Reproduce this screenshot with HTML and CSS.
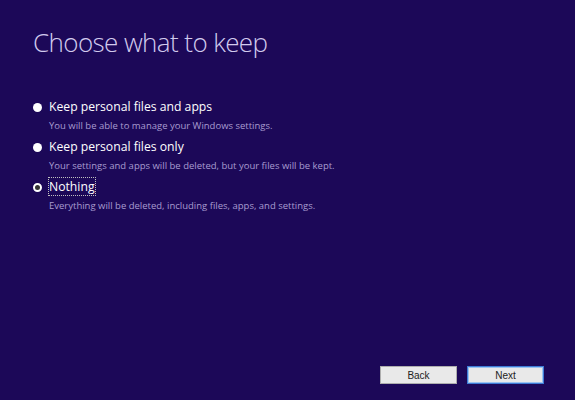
FILE: index.html
```html
<!DOCTYPE html>
<html>
<head>
<meta charset="utf-8">
<link rel="stylesheet" href="styles.css">
</head>
<body>
<div class="page">
  <h1 class="title">Choose what to keep</h1>
  <div class="options">
    <div class="option">
      <span class="radio"></span>
      <div class="text">
        <div class="label">Keep personal files and apps</div>
        <div class="desc">You will be able to manage your Windows settings.</div>
      </div>
    </div>
    <div class="option">
      <span class="radio"></span>
      <div class="text">
        <div class="label">Keep personal files only</div>
        <div class="desc">Your settings and apps will be deleted, but your files will be kept.</div>
      </div>
    </div>
    <div class="option">
      <span class="radio checked"></span>
      <div class="text">
        <div class="label"><span class="focus">Nothing</span></div>
        <div class="desc">Everything will be deleted, including files, apps, and settings.</div>
      </div>
    </div>
  </div>
  <div class="buttons">
    <button class="btn">Back</button>
    <button class="btn primary">Next</button>
  </div>
</div>
</body>
</html>
```
FILE: styles.css
```css
html, body {
  margin: 0;
  padding: 0;
  background: #1c0858;
}
.page {
  height: 400px;
  box-sizing: border-box;
  display: flex;
  flex-direction: column;
  padding: 24px 31px 16px 33px;
  font-family: "Open Sans", "Liberation Sans", sans-serif;
}
.title {
  margin: 0;
  font-weight: 300;
  font-size: 26px;
  letter-spacing: -0.6px;
  line-height: 36px;
  color: #d2cbee;
}
.options {
  margin-top: 38px;
  display: flex;
  flex-direction: column;
  gap: 4px;
}
.option {
  display: flex;
  align-items: flex-start;
  gap: 7px;
}
.radio {
  width: 9px;
  height: 9px;
  border-radius: 50%;
  background: #ffffff;
  margin-top: 5px;
  box-sizing: border-box;
  flex: none;
}
.radio.checked {
  background: #333333;
  border: 2px solid #ffffff;
}
.label {
  color: #ffffff;
  font-size: 12.2px;
  line-height: 18px;
}
.focus {
  outline: 1px dotted #c0c0c0;
  outline-offset: 0;
}
.desc {
  color: #a89cd0;
  font-size: 9.5px;
  line-height: 16px;
  margin-top: 2px;
}
.buttons {
  margin-top: auto;
  display: flex;
  justify-content: flex-end;
  gap: 10px;
}
.btn {
  width: 77px;
  height: 18px;
  padding: 0;
  margin: 0;
  border: 1px solid #adadad;
  background: #e9e9e9;
  color: #222;
  font-family: "Liberation Sans", sans-serif;
  font-size: 10px;
  border-radius: 0;
}
.btn.primary {
  border: 1px solid #3d7bd6;
  box-shadow: inset 0 0 0 1px #9cc3f0;
}
```
